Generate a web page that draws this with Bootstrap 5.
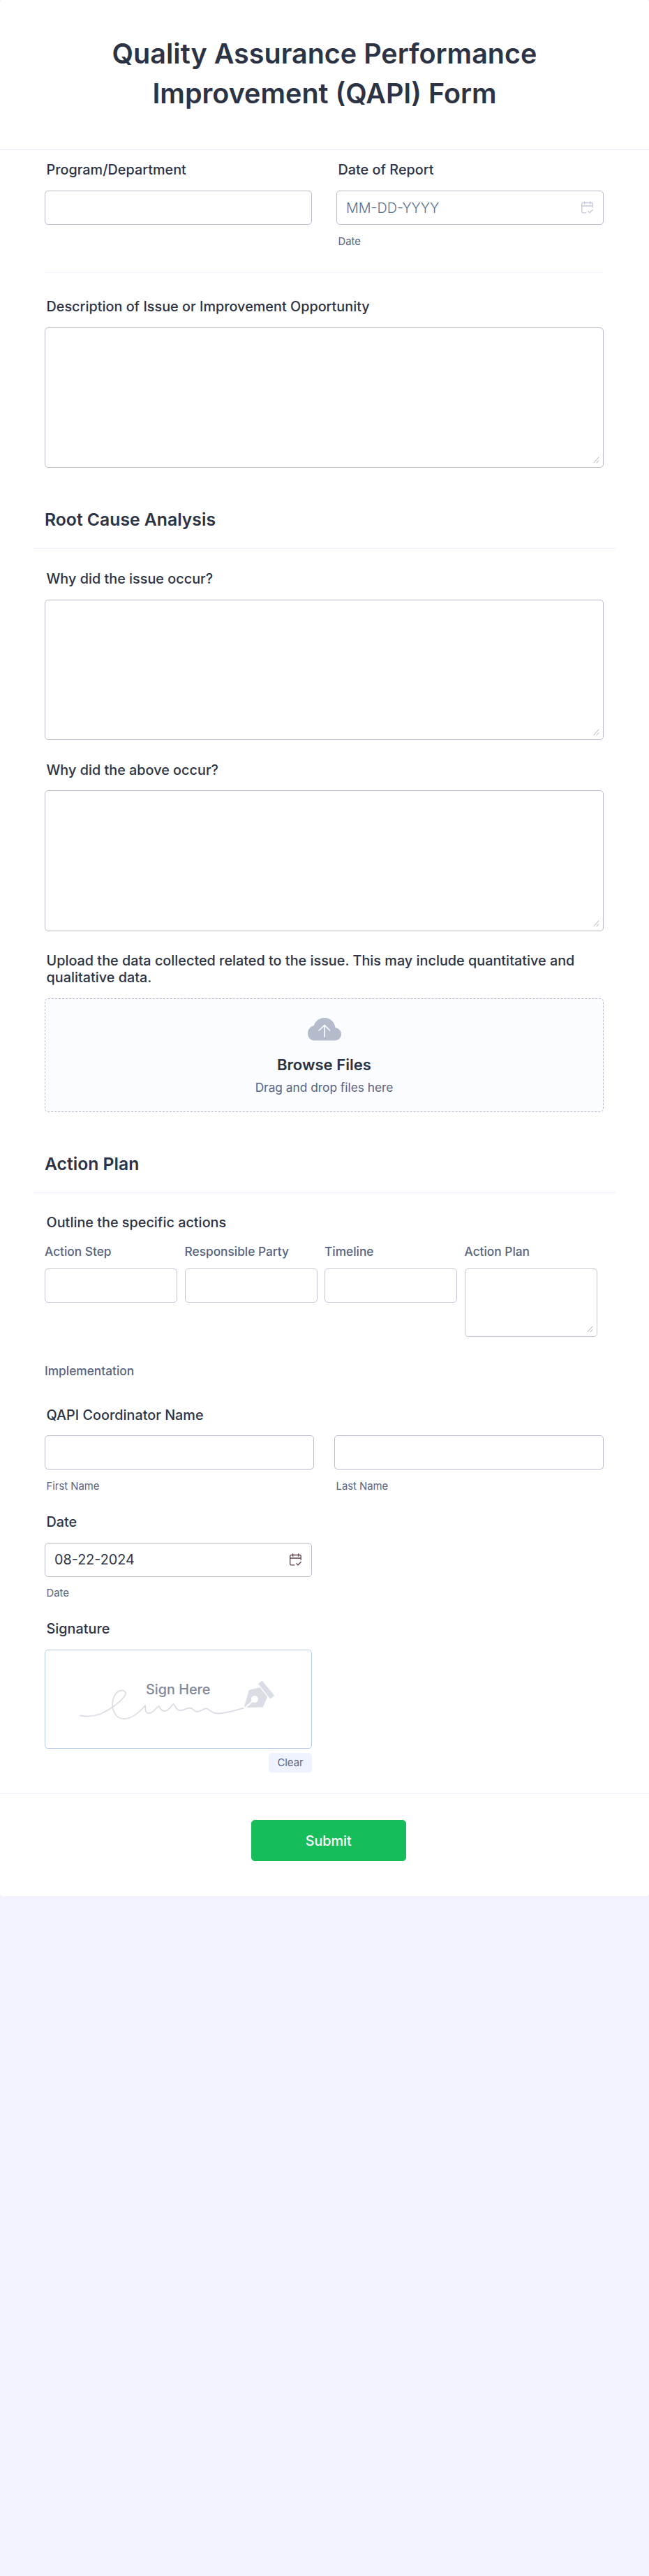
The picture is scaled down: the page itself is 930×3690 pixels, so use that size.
<!DOCTYPE html>
<html lang="en">
<head>
<meta charset="utf-8">
<meta name="viewport" content="width=device-width, initial-scale=1">
<title>Quality Assurance Performance Improvement (QAPI) Form</title>
<link href="https://cdn.jsdelivr.net/npm/bootstrap@5.3.0/dist/css/bootstrap.min.css" rel="stylesheet">
<style>
  body { background: #f3f3fe; color: #2c3345; font-family: Inter, "Liberation Sans", sans-serif; }
  .form-sheet { height: 2715.6px; border-radius: 4px; }
  .form-head { height: 215px; border-bottom: 1px solid #ecedfa; padding-top: 49px; }
  .form-head h1 { font-size: 39.5px; line-height: 57px; font-weight: 600; }
  .form-area { padding: 0 65px 0 64px; }
  .field { display: flow-root; }
  .q-label { display: block; margin: 0 0 17.3px 2.5px; padding-top: .7px; font-size: 19.79px; line-height: 24.3px; font-weight: 500; letter-spacing: .02px; }
  .q-sub { display: block; margin: 13.5px 0 0 2.5px; font-size: 14.84px; line-height: 20px; color: #57647e; }
  .form-control { height: 49px; border: 1px solid #b8bdc9; border-radius: 5px; padding: 0 13px; font-size: 19.79px; color: #2c3345; resize: none; box-shadow: none; }
  .form-control::placeholder { color: #57708f; font-weight: 300; opacity: 1; }
  .area-tall { height: 201.4px; }
  .area-short { height: 98.5px; }
  .grip { right: 6px; bottom: 6px; }
  .cal { right: 15px; top: 15px; }
  .pair { display: grid; grid-template-columns: 383px 383px; justify-content: space-between; }
  .pair.names { grid-template-columns: 386px 386px; }
  .half { width: 383px; }
  .rule { height: 2px; background: #f7f7fd; }
  .sect { height: 57px; margin: 0 -17px; padding: 0 17px; border-bottom: 1px solid #eeeffc; font-size: 24.73px; line-height: 30px; font-weight: 600; }
  .f-top { height: 174px; padding-top: 15.8px; }
  .f-desc { height: 338px; padding-top: 35.4px; }
  .f-why { height: 273.6px; }
  .f-why.first { margin-top: 30.3px; }
  .f-upload { height: 288.6px; }
  .f-actions { margin-top: 29.3px; height: 275.5px; }
  .f-names { height: 153.4px; }
  .f-date { height: 153.4px; }
  .dropzone { height: 163px; border: 1px dashed #b8bdc9; border-radius: 5px; background: #fafcff; padding-top: 27px; }
  .dz-title { font-size: 22.1px; line-height: 27px; font-weight: 600; margin-top: 20.5px; }
  .dz-note { font-size: 17.31px; line-height: 20px; margin-top: 9px; color: #57647e; }
  .matrix { display: grid; grid-template-columns: repeat(4, 190px); column-gap: 10.5px; padding-top: 2px; }
  .matrix .form-control { border-color: #c2c7d3; }
  .m-label { font-size: 17.31px; line-height: 20px; color: #57647e; font-weight: 500; margin-bottom: 14.2px; white-space: nowrap; }
  .m-impl { margin-top: 38.7px; }
  .sigpad { height: 142.5px; border: 1px solid #b4cbe8; border-radius: 5px; }
  .sigpad svg { left: 49px; top: 43px; }
  .sig-text { left: 144px; top: 44px; font-size: 19.79px; line-height: 24px; color: #81889b; font-weight: 500; }
  .btn-clear { margin-top: 5.5px; width: 62px; height: 28.5px; padding: 0; border: 0; border-radius: 5px; background: #eff3ff; color: #57647e; font-size: 14.84px; line-height: 28.5px; }
  .f-foot { height: 147px; border-top: 1px solid #eeeffc; padding: 37px 0 0 11.500px; }
  .f-sign { height: 248.4px; }
  .btn-send { width: 222.5px; height: 59.4px; border: 1px solid #18bd5b; border-radius: 5px; background: #18bd5b; color: #fff; font-size: 19.79px; font-weight: 500; padding: 2px 0 0; }
</style>
</head>
<body>
<svg class="d-none" aria-hidden="true">
  <symbol id="i-cal" viewBox="0 0 17 18">
    <g fill="none" stroke="currentColor" stroke-width="1.3" stroke-linecap="round" stroke-linejoin="round">
      <path d="M6.800 16.800H2.300A1.600 1.600 0 0 1 .7 15.200V4.100A1.600 1.600 0 0 1 2.300 2.500H14.600A1.600 1.600 0 0 1 16.200 4.100V9.200M.7 7H16.200M4.700 .8V4.200M12.700 .8V4.200M10 14.800L12 16.800L16.200 12.500"/>
    </g>
  </symbol>
  <symbol id="i-grip" viewBox="0 0 9 10"><path d="M.6 9.2L8.2.8M4.8 9.2L8.2 5.4" fill="none" stroke="#a9adb8" stroke-width="1"/></symbol>
</svg>
<form class="form-sheet bg-white">
  <header class="form-head text-center">
    <h1 class="m-0">Quality Assurance Performance<br>Improvement (QAPI) Form</h1>
  </header>
  <div class="form-area">
    <div class="field f-top">
      <div class="pair">
        <div><label class="q-label">Program/Department</label><input class="form-control" type="text"></div>
        <div>
          <label class="q-label">Date of Report</label>
          <div class="position-relative">
            <input class="form-control" type="text" placeholder="MM-DD-YYYY">
            <svg class="cal position-absolute" width="17" height="18" style="color:#c3cad8"><use href="#i-cal"/></svg>
          </div>
          <span class="q-sub">Date</span>
        </div>
      </div>
    </div>
    <div class="rule"></div>
    <div class="field f-desc">
      <label class="q-label">Description of Issue or Improvement Opportunity</label>
      <div class="position-relative"><textarea class="form-control area-tall d-block"></textarea><svg class="grip position-absolute" width="9" height="10"><use href="#i-grip"/></svg></div>
    </div>
    <h2 class="sect mb-0">Root Cause Analysis</h2>
    <div class="field f-why first">
      <label class="q-label">Why did the issue occur?</label>
      <div class="position-relative"><textarea class="form-control area-tall d-block"></textarea><svg class="grip position-absolute" width="9" height="10"><use href="#i-grip"/></svg></div>
    </div>
    <div class="field f-why">
      <label class="q-label">Why did the above occur?</label>
      <div class="position-relative"><textarea class="form-control area-tall d-block"></textarea><svg class="grip position-absolute" width="9" height="10"><use href="#i-grip"/></svg></div>
    </div>
    <div class="field f-upload">
      <label class="q-label">Upload the data collected related to the issue. This may include quantitative and qualitative data.</label>
      <div class="dropzone d-flex flex-column align-items-center">
        <svg width="48" height="33" viewBox="0 0 48 33"><path d="M9 32.500C4 32.500 0 28 0 22.500C0 17 3.500 12 8.700 11.200C10.500 5 16.500 0 23.800 0C32 0 38.500 5.800 39.500 14C44.500 15 48 18.500 48 23.200C48 28.500 44 32.500 39 32.500Z" fill="#b4bbcb"/><path d="M24 27V10.300M16.200 18L24 10.300L31.500 18" fill="none" stroke="#fafcff" stroke-width="1.700" stroke-linecap="round" stroke-linejoin="round"/></svg>
        <div class="dz-title">Browse Files</div>
        <div class="dz-note">Drag and drop files here</div>
      </div>
    </div>
    <h2 class="sect mb-0">Action Plan</h2>
    <div class="field f-actions">
      <label class="q-label">Outline the specific actions</label>
      <div class="matrix">
        <div><div class="m-label">Action Step</div><input class="form-control" type="text"></div>
        <div><div class="m-label">Responsible Party</div><input class="form-control" type="text"></div>
        <div><div class="m-label">Timeline</div><input class="form-control" type="text"></div>
        <div><div class="m-label">Action Plan</div><div class="position-relative"><textarea class="form-control area-short d-block"></textarea><svg class="grip position-absolute" width="9" height="10"><use href="#i-grip"/></svg></div></div>
      </div>
      <div class="m-label m-impl">Implementation</div>
    </div>
    <div class="field f-names">
      <label class="q-label">QAPI Coordinator Name</label>
      <div class="pair names">
        <div><input class="form-control" type="text"><span class="q-sub">First Name</span></div>
        <div><input class="form-control" type="text"><span class="q-sub">Last Name</span></div>
      </div>
    </div>
    <div class="field f-date half">
      <label class="q-label">Date</label>
      <div class="position-relative">
        <input class="form-control" type="text" value="08-22-2024">
        <svg class="cal position-absolute" width="17" height="18" style="color:#5f3e4c"><use href="#i-cal"/></svg>
      </div>
      <span class="q-sub">Date</span>
    </div>
    <div class="field f-sign half">
      <label class="q-label">Signature</label>
      <div class="sigpad position-relative">
        <svg class="position-absolute" width="281" height="58" viewBox="0 0 281 58" fill="none">
          <g transform="translate(0 1)">
            <path d="M1 49.500C24 54 39 43 49 36C60 28 68 20 65.500 15.500C62 11 53 14 49.500 22C43 38 51 54 63 54C76 55 88 42 94.300 35C94 43 95 46 99.300 46C106 46 109 38 113.700 36C116 39 117 43 122 43C129 42 131 35 134.700 33C138 36 138 43 146 42C151 41 154 38.500 158 38.500C163 39 163 43 168 44C174 44 178 38 183 39.500C189 44 192 46.500 199 46.500C211 46 222 42 234.500 39" stroke="#dadde5" stroke-width="1.800" stroke-linecap="round" stroke-linejoin="round"/>
            <path d="M236 37L242.700 13L258.300 9L269.300 22.500L262.700 37.500L238 38Z" fill="#dadde5"/>
            <circle cx="251" cy="26" r="5" fill="#fff"/>
            <path d="M251 26L236 39.500" stroke="#fff" stroke-width="2"/>
            <path d="M261.700 -.5L256 4L273.300 25.500L279.300 21Z" fill="#dadde5"/>
          </g>
        </svg>
        <div class="sig-text position-absolute text-nowrap">Sign Here</div>
      </div>
      <div class="text-end"><button class="btn btn-clear d-inline-block align-top" type="button">Clear</button></div>
    </div>
  </div>
  <footer class="f-foot text-center"><button class="btn btn-send" type="button">Submit</button></footer>
</form>
<script src="https://cdn.jsdelivr.net/npm/bootstrap@5.3.0/dist/js/bootstrap.bundle.min.js"></script>
</body>
</html>
